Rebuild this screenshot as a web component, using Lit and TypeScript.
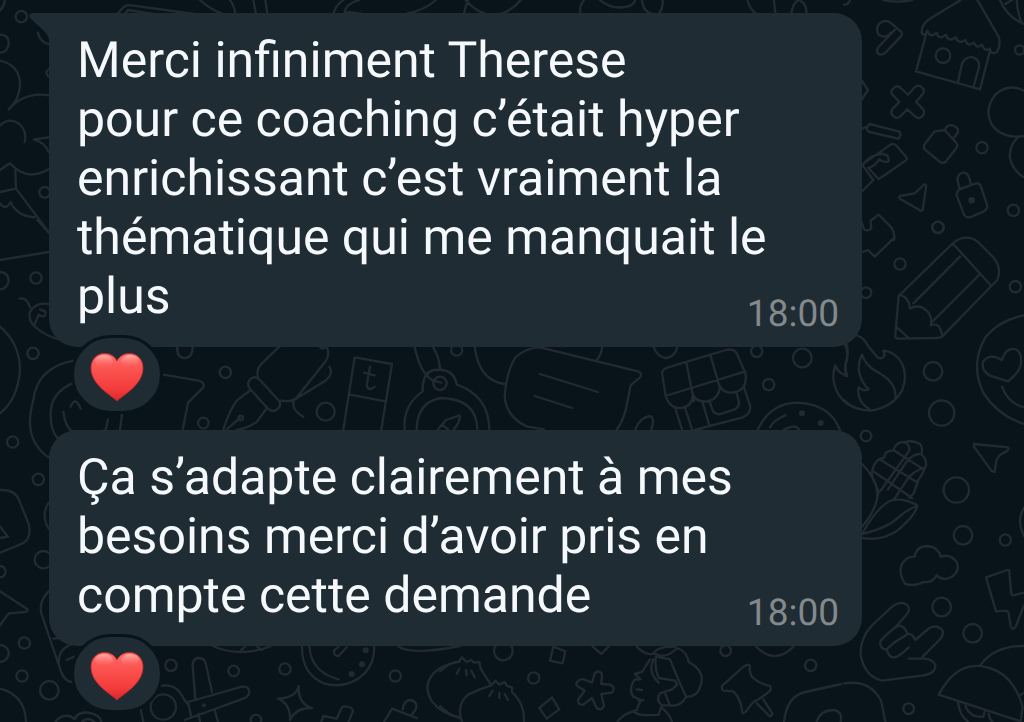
import { LitElement, html, svg, css } from "lit";
import { customElement, property } from "lit/decorators.js";

interface Panel {
  x: number;
  y: number;
  lines: string;
  rings: number[][];
  dots?: number[][];
}

// Each panel is drawn on a grid three times finer than the page.
const panels: Panel[] = [
  {
    x: 0,
    y: 0,
    rings: [],
    lines: `M352 42L370 22Q378 14 394 16L584 42M374 42L384 30L460 42
      M600 0Q630 28 664 40M690 0Q704 18 706 42M760 0L768 42M796 0L802 42
      M1030 0Q1006 16 1000 42M1078 0Q1036 12 1034 38Q1050 34 1084 42M1308 0Q1276 30 1218 42
      M1404 0Q1396 20 1392 42M1396 0Q1436 44 1480 46Q1530 40 1562 0
      M1752 0Q1736 20 1742 42M1800 0Q1836 30 1880 20Q1900 16 1906 0M1926 0Q1930 40 1962 42M1988 0Q1990 24 1976 42
      M2242 0Q2250 30 2270 42M2322 0L2326 42M2374 42Q2378 8 2396 0Q2420 8 2420 42`,
  },
  {
    x: 844,
    y: 0,
    rings: [[297, 167, 22], [414, 443, 17], [508, 631, 17], [282, 682, 17], [527, 150, 14]],
    dots: [[383, 601, 10]],
    lines: `M0 14Q14 14 18 0M118 0Q160 10 204 0
      M104 104Q92 82 110 68Q128 56 144 72L170 94Q178 102 170 110L128 154Q114 170 102 160Q94 150 106 138L152 90M104 104Q130 118 140 98
      M350 0L252 60Q232 76 233 98Q240 112 250 92Q258 116 278 98Q284 122 306 104Q312 128 336 112Q342 134 364 120Q370 142 390 128Q398 148 414 134Q420 156 438 146Q440 166 458 156Q470 142 465 112L400 0
      M246 104L216 214L408 268L438 152M342 246L354 190Q366 168 388 172Q408 180 405 202L388 262
      M468 0Q488 50 540 72M518 0Q520 40 534 70M484 12L504 0
      M52 240L72 270L52 300
      M150 264Q160 254 170 264L192 284L212 262Q224 252 234 262Q244 272 236 282L216 306L238 328Q244 340 234 350Q224 360 212 348L190 328L168 350Q158 358 148 348Q136 338 146 326L166 306L146 284Q136 274 150 264Z
      M76 372L164 394Q172 398 168 408L164 416L76 396Q66 392 70 380ZM54 386L70 380
      M54 494L140 434Q150 428 158 438L186 470Q192 478 182 484L104 538L74 504M54 494L88 540L54 574M54 496Q84 460 116 462Q136 464 134 484Q120 490 106 478Q92 500 72 504
      M272 394L302 390L338 430Q342 438 336 446L306 484Q298 492 288 486L242 448Q236 438 244 430ZM302 392Q308 372 326 376Q348 384 340 400L326 418
      M168 588L212 580L240 554Q248 550 246 562L236 630Q234 636 226 630L170 598Q162 592 168 588Z
      M352 566L396 550Q406 548 410 558L430 616Q430 630 416 636L378 652Q366 654 360 644L338 586Q336 574 352 566ZM346 564L340 538Q344 516 362 518Q376 522 380 552
      M540 272Q492 248 454 284Q420 326 442 372Q474 418 540 408M524 410Q494 436 498 474Q506 512 540 532
      M52 664L60 688Q74 696 82 684L80 662L104 644L142 682Q154 700 150 720`,
  },
  {
    x: 844,
    y: 220,
    rings: [[282, 22, 17], [168, 132, 17], [514, 200, 17], [66, 218, 16], [267, 454, 28], [293, 579, 38], [66, 648, 16]],
    lines: `M150 50Q152 56 148 56L92 110L72 90L54 96
      M164 228L326 70Q366 38 402 66L450 114Q474 146 460 180L442 198L300 344Q292 354 276 354L162 356Q152 356 154 344ZM326 70L442 198M348 110L208 250M404 166L266 304
      M166 224Q196 232 198 266Q226 250 250 274Q266 292 260 316Q286 304 294 344M156 320L194 354
      M540 286Q466 300 424 352Q376 436 420 522Q464 588 540 612
      M492 484L436 466Q410 450 418 424Q438 398 474 420Q486 380 516 388Q536 400 530 434Q526 458 492 484ZM474 500Q492 550 540 562
      M26 344Q54 344 74 380L100 412Q116 420 122 406L118 392Q152 394 174 430Q192 470 174 512Q146 562 80 572Q30 570 0 540
      M0 370Q14 390 8 424Q0 440 6 468M76 568Q36 542 44 502Q60 516 74 508Q52 486 46 458Q40 430 54 404Q66 440 104 458Q158 488 154 532`,
  },
  {
    x: 844,
    y: 420,
    rings: [[337, 210, 38], [357, 346, 28], [484, 360, 17], [293, 561, 28], [386, 640, 28], [194, 866, 16]],
    lines: `M390 72L492 82Q496 88 488 94Q458 106 456 128L452 156L442 152L390 80Z
      M54 132Q110 188 98 242Q88 280 54 320M54 342Q102 256 144 240Q184 234 220 256Q216 284 160 332Q110 364 54 354M54 342Q132 324 166 290Q192 266 220 258
      M98 242L104 214L90 184Q76 160 92 132Q102 114 120 114Q122 90 148 92Q154 66 180 66Q198 72 196 92M180 68Q204 58 228 72Q238 84 232 102Q252 122 244 142Q236 162 222 182L210 218L196 234
      M88 154L204 234M110 120L222 188M148 90L238 148M196 92L110 212M232 102Q204 100 184 130L132 208M240 144Q206 154 190 178L150 238
      M184 492Q164 464 172 436Q186 408 212 410Q216 378 252 378Q284 382 290 410Q320 400 338 426Q350 460 316 474Q294 482 278 466Q264 490 238 486Q216 500 184 492Z
      M540 264Q516 300 540 348
      M426 472L490 450Q498 450 496 458L502 522Q508 530 516 524L540 518M426 472L456 574L484 572Q492 572 494 580L500 620Q508 634 516 618L540 556
      M188 554Q204 568 184 588L152 624Q108 658 108 670Q112 690 128 688Q152 664 180 650M152 624Q176 606 190 640M128 688Q134 714 152 712Q166 710 194 682M180 650Q200 630 214 660L256 624Q280 612 296 632Q300 646 286 660L236 710
      M188 554Q170 540 142 562L82 618Q48 656 50 704Q60 768 114 782L238 766Q274 762 274 736Q268 718 240 716L194 716
      M0 790Q80 778 112 844L124 906
      M410 734Q454 676 540 678M284 824Q340 718 430 742Q508 762 536 860L530 904ZM342 848Q348 890 374 906M364 858Q380 896 418 890L422 874M434 882Q436 898 446 906M530 824L540 818`,
  },
  {
    x: 0,
    y: 0,
    rings: [[64, 50, 17], [134, 577, 16]],
    lines: `M0 32Q14 16 14 0M0 104Q28 104 26 132Q22 158 0 158
      M0 182Q60 196 60 254Q58 300 26 328Q74 274 146 286M0 376Q30 350 58 372Q82 394 74 426M102 418L146 412M102 418Q136 428 146 456
      M0 510L30 490Q80 546 146 508M46 510L48 566L0 576M48 566L146 696M0 610Q16 634 32 606Q50 648 104 652M114 98Q120 126 146 132M146 208Q132 218 146 230`,
  },
  {
    x: 0,
    y: 220,
    rings: [[108, 174, 17], [99, 400, 17], [38, 666, 17]],
    lines: `M112 0L146 38M0 120L146 96M0 156Q26 158 26 184Q20 208 0 208
      M58 236Q80 230 90 262M146 252Q106 246 90 276Q84 298 102 318L116 284Q140 298 136 274L120 268M102 318Q140 352 190 362
      M0 320Q60 370 60 452Q52 540 0 580
      M222 422Q112 442 100 540Q78 620 104 666Q120 696 146 712M222 488Q154 516 152 578Q150 630 174 656M190 576Q196 624 220 636M212 560Q226 526 242 566M324 598L318 626L300 640M366 582L360 630M530 380L534 404L540 410`,
  },
  {
    x: 160,
    y: 340,
    rings: [[196, 97, 17], [130, 249, 16], [497, 215, 27], [242, 234, 7]],
    lines: `M52 20Q52 56 76 54Q98 52 98 20
      M10 104L116 122Q136 128 130 142L84 188L68 270
      M358 20L302 74Q288 90 294 112M500 20Q510 42 498 62L412 170Q398 188 364 182M480 20Q488 32 496 20M508 80Q522 100 496 122L402 180Q392 210 430 230
      M270 118Q284 104 300 120L358 184Q366 200 348 210Q338 218 324 206L268 144Q260 130 270 118ZM272 150L230 182Q210 208 190 268M318 208L290 246Q260 266 230 270M200 268L240 234
      M550 268L584 52L696 72L664 268M570 164L676 184M630 80L620 136Q626 156 644 140M612 98L644 106`,
  },
  {
    x: 410,
    y: 340,
    rings: [[140, 30, 17], [90, 130, 20]],
    lines: `M14 20Q30 100 70 122L94 128M68 20Q88 50 90 88M38 154Q36 96 74 90Q132 84 140 134Q236 166 238 268M38 154Q-22 196 -16 268M20 268Q22 186 92 174Q200 176 202 268M84 268L108 240L148 226Q154 240 132 268M96 254L114 268
      M194 20Q206 122 284 132M576 20Q576 42 560 60
      M402 268L352 260Q286 230 284 166Q292 88 316 52Q350 22 390 22L684 94Q698 100 690 112L662 136L648 206Q636 252 620 268M390 102L564 156M374 168L486 204
      M676 268Q690 232 720 228Q736 234 724 268`,
  },
  {
    x: 640,
    y: 340,
    rings: [[350, 34, 17], [386, 134, 17], [487, 54, 28]],
    dots: [[486, 220, 9], [542, 249, 9]],
    lines: `M40 20Q54 54 78 54Q106 50 112 20
      M66 100Q66 88 84 82L258 30Q280 24 290 40L316 100Q324 144 288 156Q252 164 240 138Q238 176 204 184Q166 188 158 160Q160 196 126 204Q84 206 76 160ZM76 168L316 94M140 72L162 184M212 48L240 146
      M106 206L126 268M136 206L156 268M188 188L208 256M164 270L308 232Q334 222 330 196L312 142M210 188L218 212Q228 228 248 220L284 208Q300 200 296 182L290 160
      M354 268Q390 190 472 188Q570 192 600 270M390 262Q398 242 436 226M430 270Q468 250 476 268
      M614 0Q630 30 618 64Q614 84 622 108Q594 100 586 76Q570 120 596 164Q616 198 660 208`,
  },
  {
    x: 0,
    y: 420,
    rings: [[115, 178, 17], [73, 669, 17], [66, 768, 17], [148, 811, 28], [513, 736, 17], [490, 861, 38], [130, 419, 26], [0, 455, 17]],
    lines: `M0 210Q46 208 58 242L86 312Q96 356 68 370L0 398M0 320L24 350L0 354
      M0 514L80 566Q88 574 74 576L26 580L0 616M146 248Q122 284 146 326
      M146 514Q116 544 124 580L178 740Q190 784 216 786M160 656L176 654M222 670Q174 684 176 730M200 720L222 710
      M0 674Q28 680 26 704Q18 726 0 726M0 806Q76 826 78 906
      M166 906Q180 884 210 888L224 898Q232 874 266 878Q300 884 304 906M246 906Q262 888 284 906M422 868L430 906`,
  },
  {
    x: 160,
    y: 630,
    rings: [[221, 123, 16], [375, 117, 17], [706, 138, 17], [288, 270, 16]],
    dots: [[132, 226, 6], [617, 61, 9], [606, 103, 9], [575, 132, 9]],
    lines: `M158 48Q240 84 334 48M244 60L256 50M292 50L306 60
      M106 208L98 106Q98 84 118 84Q136 86 138 104L156 186M84 216L246 170Q266 168 268 184Q268 200 250 206L74 270M84 216L94 262M116 252L120 276M164 240L174 276M0 168Q50 158 72 208L84 224
      M426 48Q424 132 492 160Q560 180 614 130Q646 94 642 48M448 48Q452 126 536 148M536 50L522 62Q520 78 536 78L560 52
      M716 50Q760 76 900 48
      M354 206Q408 204 416 168Q414 222 456 234Q408 232 390 270Q392 222 354 206Z
      M484 276L490 258L530 266L546 232Q552 226 574 234Q582 242 576 250L566 276M672 276L696 236L770 264M728 238Q732 210 752 210Q776 216 766 240L754 256M900 94Q842 106 822 128Q786 168 816 214Q842 250 900 264`,
  },
  {
    x: 440,
    y: 630,
    rings: [[190, 63, 28], [281, 144, 17], [1112, 106, 17], [857, 62, 16]],
    lines: `M340 50L376 64L368 100L330 92ZM336 202L358 238L320 266L298 234ZM458 50L484 72L506 50M948 50Q1006 106 1060 50
      M0 124Q34 94 56 96L66 82L80 96L94 90L102 98L118 96L122 116L150 160M0 228Q26 256 60 262M58 116L50 132M78 120L80 136M94 122L104 142
      M66 276Q48 224 84 194Q120 176 154 166L166 152L178 164L194 156L202 168L216 172L216 186Q254 220 252 276M158 182L148 198M178 188L178 204M194 192L204 210
      M416 152Q424 144 436 150L456 158L464 130Q476 118 486 132L484 162L512 164Q528 174 516 188L484 192L492 228Q484 244 470 234L456 204L430 224Q414 226 414 210L434 182L412 168Q404 160 416 152Z
      M590 50Q620 80 642 70Q648 50 706 50M642 70Q676 90 712 54Q740 64 746 96Q800 124 780 172Q770 202 738 200Q712 144 690 88L648 80Q642 114 656 144L706 152L712 164L696 178L660 190Q646 210 666 226L690 226L676 192M738 200Q722 232 690 226M630 88L606 126L584 132L602 148L584 148Q564 178 580 200L602 210L590 240L580 244Q596 260 656 254L666 226M606 180L590 178M610 210L596 212M580 244Q548 252 532 276M664 232Q690 252 696 276M640 88Q622 126 656 158
      M922 104Q934 104 928 118L934 138Q954 160 990 168Q996 178 986 186Q958 208 940 216L916 246Q904 254 906 240Q902 206 880 184L850 182Q840 174 850 164L908 112ZM950 220L990 260L998 252L970 208
      M1032 276Q1040 198 1096 186L1204 162M1130 276Q1140 240 1182 240Q1208 244 1202 276`,
  },
];

@customElement("chat-wallpaper")
export class ChatWallpaper extends LitElement {
  static styles = css`
    :host {
      display: block;
    }
    .doodles {
      display: block;
      width: 100%;
      height: 100%;
      fill: none;
      stroke: #222a31;
      stroke-width: 7;
      stroke-linecap: round;
      stroke-linejoin: round;
    }
    .dot {
      fill: #222a31;
      stroke: none;
    }
  `;

  render() {
    return html`<svg class="doodles" viewBox="0 0 1024 722" preserveAspectRatio="xMinYMin slice" aria-hidden="true">
      ${panels.map(
        (p) => svg`<g transform="translate(${p.x} ${p.y}) scale(0.33333)">
          <path d=${p.lines}></path>
          ${p.rings.map(([x, y, r]) => svg`<circle cx=${x} cy=${y} r=${r}></circle>`)}
          ${(p.dots ?? []).map(([x, y, r]) => svg`<circle class="dot" cx=${x} cy=${y} r=${r}></circle>`)}
        </g>`
      )}
    </svg>`;
  }
}

@customElement("chat-message")
export class ChatMessage extends LitElement {
  @property() text = "";
  @property() time = "";
  @property({ type: Boolean, reflect: true }) first = false;

  static styles = css`
    :host {
      display: block;
    }
    .bubble {
      position: relative;
      padding: 19px 23px 20px 28px;
      border-radius: 28px;
      background: #1f2c34;
    }
    :host([first]) .bubble {
      border-top-left-radius: 0;
    }
    .tail {
      position: absolute;
      top: 0;
      left: -20px;
      width: 21px;
      height: 28px;
      fill: #1f2c34;
    }
    .text {
      margin: 0;
      color: #f5f9fc;
      font-size: 50px;
      line-height: 59px;
      white-space: pre-line;
      text-rendering: geometricPrecision;
    }
    .time {
      float: right;
      margin-top: 28px;
      color: #84898c;
      font-size: 37px;
      line-height: 37px;
    }
    .reaction {
      position: relative;
      display: flex;
      align-items: center;
      justify-content: center;
      width: 92px;
      height: 79px;
      margin: -12px 0 0 22px;
      padding: 4px 0 0;
      border: 3px solid #08131a;
      border-radius: 40px;
      background: #1f2c34;
      box-sizing: border-box;
    }
    .heart {
      width: 54px;
      height: 50px;
    }
  `;

  render() {
    return html`
      <div class="bubble">
        ${this.first
          ? html`<svg class="tail" viewBox="0 0 21 28" aria-hidden="true"><path d="M3 0H21V28L20 26Q19 22 15 18L1 5Q-1 1 3 0Z"></path></svg>`
          : null}
        <p class="text">${this.text}<time class="time">${this.time}</time></p>
      </div>
      <button class="reaction" type="button" aria-label="❤️">
        <svg class="heart" viewBox="0 0 54 50" aria-hidden="true">
          <defs>
            <linearGradient id="red" x1="0" y1="0" x2="0" y2="1">
              <stop offset="0" stop-color="#ff6a66"></stop>
              <stop offset="0.35" stop-color="#fb5350"></stop>
              <stop offset="0.75" stop-color="#f33b3b"></stop>
              <stop offset="1" stop-color="#d9282a"></stop>
            </linearGradient>
            <linearGradient id="shine" x1="0" y1="0" x2="0" y2="1">
              <stop offset="0" stop-color="#ffc0b8" stop-opacity="0.8"></stop>
              <stop offset="1" stop-color="#ff7a75" stop-opacity="0"></stop>
            </linearGradient>
          </defs>
          <path fill="url(#red)" stroke="#c92a2c" stroke-width="0.8" d="M27 49C21 43 1 33 1 16C1 7 7 1.500 14.500 1.500C21 1.500 25 5 27 9C29 5 33 1.500 39.500 1.500C47 1.500 53 7 53 16C53 33 33 43 27 49Z"></path>
          <ellipse fill="url(#shine)" cx="14" cy="9" rx="9" ry="6"></ellipse>
          <ellipse fill="url(#shine)" cx="40" cy="9" rx="9" ry="6"></ellipse>
        </svg>
      </button>
    `;
  }
}

@customElement("app-root")
export class AppRoot extends LitElement {
  static styles = css`
    :host {
      position: relative;
      display: block;
      min-height: 100vh;
      overflow: hidden;
      box-sizing: border-box;
      background: #08131a;
      font-family: Roboto, "Liberation Sans", sans-serif;
    }
    .wallpaper {
      position: absolute;
      inset: 0;
    }
    .thread {
      position: relative;
      display: flex;
      flex-direction: column;
      gap: 16px;
      padding: 13px 162px 0 49px;
    }
  `;

  messages = [
    {
      text: "Merci infiniment Therese\npour ce coaching c’était hyper enrichissant c’est vraiment la thématique qui me manquait le plus",
      time: "18:00",
    },
    {
      text: "Ça s’adapte clairement à mes besoins merci d’avoir pris en compte cette demande",
      time: "18:00",
    },
  ];

  render() {
    return html`
      <chat-wallpaper class="wallpaper"></chat-wallpaper>
      <main class="thread">
        ${this.messages.map((m, i) => html`<chat-message .text=${m.text} .time=${m.time} ?first=${i === 0}></chat-message>`)}
      </main>
    `;
  }
}
